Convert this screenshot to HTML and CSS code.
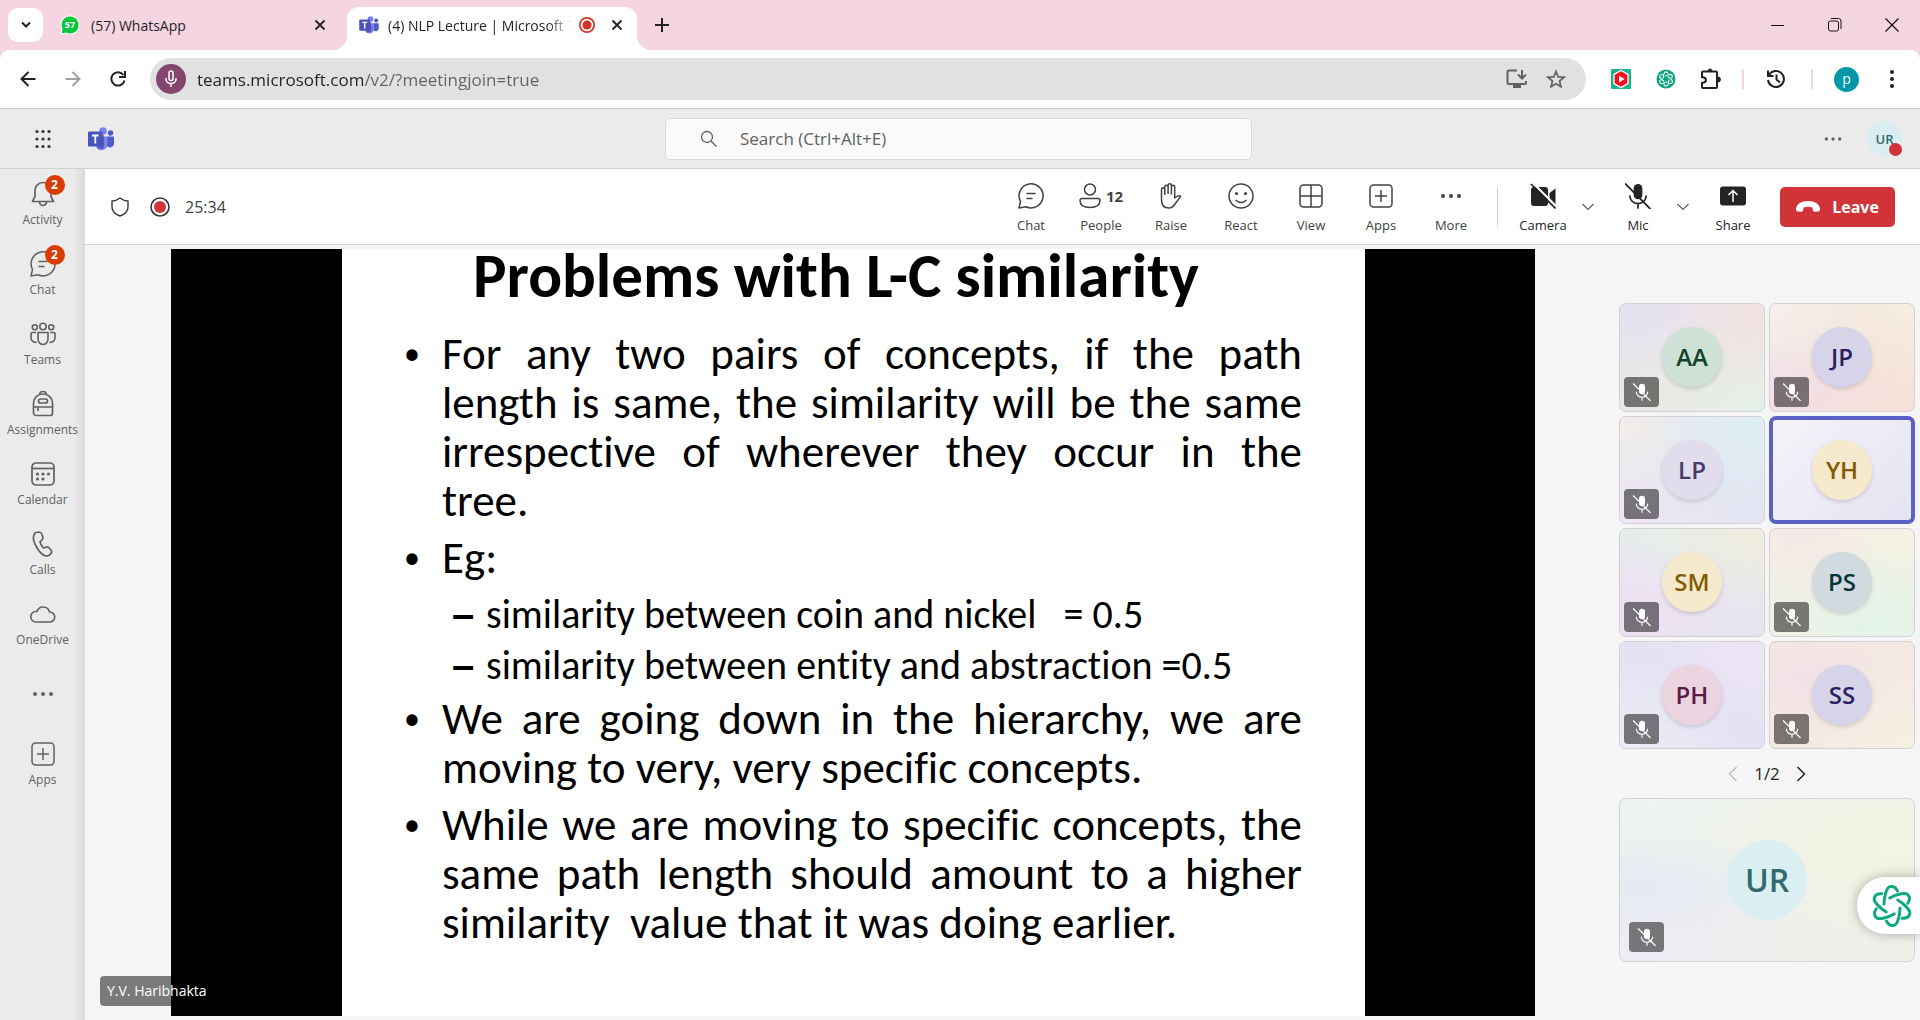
FILE: index.html
```html
<!DOCTYPE html>
<html lang="en">
<head>
<meta charset="utf-8">
<title>(4) NLP Lecture | Microsoft Teams</title>
<link rel="stylesheet" href="styles.css">
</head>
<body>
<svg class="defs" aria-hidden="true">
  <symbol id="mic-off" viewBox="0 0 24 24">
    <rect x="8" y="1" width="8" height="14" rx="4" fill="currentColor"/>
    <path d="M4.500 12a7.500 7 0 0 0 15 0M12 19v4" fill="none" stroke="currentColor" stroke-width="1.600" stroke-linecap="round"/>
    <path class="slash-gap" d="M2 -1L26 23" fill="none" stroke-width="2"/>
    <path d="M0 .5L23.500 24" fill="none" stroke="currentColor" stroke-width="1.700"/>
  </symbol>
  <symbol id="chevron" viewBox="0 0 12 8"><path d="M.5 1L6 6.500 11.500 1" fill="none" stroke="currentColor" stroke-width="1.200"/></symbol>
  <symbol id="close" viewBox="0 0 12 12"><path d="M1.500 1.500l9 9M10.500 1.500l-9 9" fill="none" stroke="currentColor" stroke-width="1.900"/></symbol>
  <symbol id="teams" viewBox="0 0 26 24">
    <circle cx="22.500" cy="6" r="2.700" fill="#5059c9"/><circle cx="15" cy="4" r="3.800" fill="#7b83eb"/>
    <path d="M19 9.500h6a1 1 0 0 1 1 1V17a4 4 0 0 1-7 2z" fill="#5059c9"/>
    <path d="M9 9.500h10.500v8a6 6 0 0 1-11 3z" fill="#7b83eb"/>
    <path d="M10 8h6v12q0 1.500-1.500 1.500H9z" fill="#3b4099" opacity=".6"/>
    <rect y="4.500" width="14.500" height="15" rx="1.300" fill="#4b53bc"/>
    <path d="M4 8.500h6.600M7.300 8.500v8" fill="none" stroke="#fff" stroke-width="1.800"/>
  </symbol>
  <symbol id="knot" viewBox="-22 -22 44 44">
    <g fill="none" stroke="currentColor" stroke-width="3" stroke-linecap="round">
      <path d="M-8-2C-8-7-6-20-1-19.500 2-20 4-18 5.500-15"/>
      <path transform="rotate(60)" d="M-8-2C-8-7-6-20-1-19.500 2-20 4-18 5.500-15"/>
      <path transform="rotate(120)" d="M-8-2C-8-7-6-20-1-19.500 2-20 4-18 5.500-15"/>
      <path transform="rotate(180)" d="M-8-2C-8-7-6-20-1-19.500 2-20 4-18 5.500-15"/>
      <path transform="rotate(240)" d="M-8-2C-8-7-6-20-1-19.500 2-20 4-18 5.500-15"/>
      <path transform="rotate(300)" d="M-8-2C-8-7-6-20-1-19.500 2-20 4-18 5.500-15"/>
    </g>
  </symbol>
  <symbol id="chat" viewBox="0 0 26 26"><path d="M1 25l1.500-6.500A12 12 0 1 1 8 23.700zM9 10.500h8M9 15.500h5" fill="none" stroke="currentColor" stroke-width="1.500" stroke-linecap="round" stroke-linejoin="round"/></symbol>
  <symbol id="apps" viewBox="0 0 24 24"><rect x="1" y="1" width="22" height="22" rx="3.500" fill="none" stroke="currentColor" stroke-width="1.500"/><path d="M12 6v12M6 12h12" stroke="currentColor" stroke-width="1.500"/></symbol>
  <symbol id="dots" viewBox="0 0 24 6"><circle cx="4" cy="3" r="2" fill="currentColor"/><circle cx="12" cy="3" r="2" fill="currentColor"/><circle cx="20" cy="3" r="2" fill="currentColor"/></symbol>
</svg>

<header class="tabs">
  <button class="tab-search" aria-label="Search tabs"><svg width="12" height="8"><path d="M2 1.500l4 4 4-4" fill="none" stroke="#222" stroke-width="2"/></svg></button>
  <div class="tab">
    <svg class="favicon" width="20" height="20" viewBox="0 0 20 20"><path d="M1 19l1-5a9 9 0 1 1 4 4z" fill="#06c63a" stroke="#fff" stroke-width="1"/><text x="10" y="13" text-anchor="middle" class="fav-count">57</text></svg>
    <span class="tab-title">(57) WhatsApp</span>
    <button class="icon-btn" aria-label="Close tab"><svg width="12" height="12"><use href="#close"/></svg></button>
  </div>
  <div class="tab active">
    <svg class="favicon" width="20" height="18"><use href="#teams"/></svg>
    <span class="tab-title">(4) NLP Lecture | Microsoft Teams</span>
    <svg class="rec" width="18" height="18"><circle cx="9" cy="9" r="7.200" fill="#fff" stroke="#d93025" stroke-width="1.700"/><circle cx="9" cy="9" r="4.500" fill="#d93025"/></svg>
    <button class="icon-btn" aria-label="Close tab"><svg width="12" height="12"><use href="#close"/></svg></button>
  </div>
  <button class="icon-btn new-tab" aria-label="New tab"><svg width="14" height="14"><path d="M7 0v14M0 7h14" stroke="#222" stroke-width="2"/></svg></button>
  <div class="window-controls">
    <button aria-label="Minimize"><svg width="14" height="14"><path d="M0 7.500h13" stroke="#111"/></svg></button>
    <button aria-label="Restore"><svg width="14" height="14" fill="none" stroke="#111"><rect x=".5" y="3" width="10" height="10" rx="2"/><path d="M3 .5h7.500a2.500 2.500 0 0 1 2.500 2.500V11"/></svg></button>
    <button aria-label="Close"><svg width="14" height="14"><path d="M.5.5l13 13M13.500.5l-13 13" stroke="#111" stroke-width="1.200"/></svg></button>
  </div>
</header>

<nav class="toolbar" aria-label="Browser">
  <button class="tool" aria-label="Back"><svg width="16" height="16" fill="none" stroke="#222" stroke-width="2"><path d="M15.500 8H2M8.500 1L1.500 8l7 7"/></svg></button>
  <button class="tool" aria-label="Forward"><svg width="16" height="16" fill="none" stroke="#a0a0a0" stroke-width="2"><path d="M.5 8H14M7.500 1l7 7-7 7"/></svg></button>
  <button class="tool" aria-label="Reload"><svg width="18" height="18" fill="none" stroke="#222" stroke-width="2"><path d="M15.500 10.500A6.700 6.700 0 1 1 14.500 5M16 1v6h-6"/></svg></button>
  <div class="omnibox">
    <button class="mic-chip" aria-label="Microphone in use"><svg width="12" height="18" fill="none" stroke="#fff" stroke-width="1.500"><rect x="4" y="1" width="4" height="9.500" rx="2"/><path d="M1 8v1a5 4.500 0 0 0 10 0V8M6 13.500V17"/></svg></button>
    <input class="url" aria-label="Address" value="teams.microsoft.com/v2/?meetingjoin=true">
    <button class="icon-btn" aria-label="Install"><svg width="22" height="20" fill="none" stroke="#5f6368" stroke-width="2"><path d="M11 1.500H3a1.500 1.500 0 0 0-1.500 1.500v10.500A1.500 1.500 0 0 0 3 15h15.500a1.500 1.500 0 0 0 1.500-1.500V12M16 1v8M12 5.500l4 4 4-4"/><path d="M7 17.500h8" stroke-width="3"/></svg></button>
    <button class="icon-btn" aria-label="Bookmark"><svg width="20" height="20" fill="none" stroke="#5f6368" stroke-width="1.800"><path d="M10 2.500l2.200 5.300 5.800.5-4.400 3.700 1.300 5.700-4.900-3-4.900 3 1.300-5.700L2 8.300l5.800-.5z"/></svg></button>
  </div>
  <div class="extensions">
    <button class="tool" aria-label="Video extension"><svg width="20" height="20"><rect width="20" height="20" rx="1" fill="#19b48c"/><path d="M10 1.500l7 4v9l-7 4-7-4v-9z" fill="#f50f1e" stroke="#fff" stroke-width="1.300"/><path d="M8 6.500v7l5.500-3.500z" fill="#fff"/></svg></button>
    <button class="tool" aria-label="Assistant extension"><svg width="20" height="20" viewBox="0 0 20 20"><circle cx="10" cy="10" r="9.500" fill="#10a37f"/><svg class="mini-knot" x="2" y="2" width="16" height="16"><use href="#knot"/></svg></svg></button>
    <button class="tool" aria-label="Extensions"><svg width="22" height="22" fill="none" stroke="#222" stroke-width="2"><path d="M2 4.500a1 1 0 0 1 1-1h13a1 1 0 0 1 1 1V19a1 1 0 0 1-1 1H3a1 1 0 0 1-1-1v-4q4-.5 4-3t-4-3z"/><path d="M8 3a2 2 0 0 1 4 0zM18 9a2 2 0 0 1 0 5z" fill="#222" stroke-width="1"/></svg></button>
    <span class="sep"></span>
    <button class="tool" aria-label="History"><svg width="20" height="20" fill="none" stroke="#222" stroke-width="2"><path d="M3 6a8 8 0 1 1-1 5M2 1.500V7h5.500M10.500 5.500V10.500l3.500 3"/></svg></button>
    <span class="sep second"></span>
    <button class="tool" aria-label="Profile"><span class="profile">p</span></button>
    <button class="tool" aria-label="Menu"><svg width="6" height="20" fill="#222"><circle cx="3" cy="3" r="2"/><circle cx="3" cy="10" r="2"/><circle cx="3" cy="17" r="2"/></svg></button>
  </div>
</nav>

<header class="teams-head">
  <div class="brand">
    <button class="tool waffle" aria-label="App launcher"><svg width="20" height="20" fill="#333"><circle cx="4" cy="2.500" r="1.600"/><circle cx="10" cy="2.500" r="1.600"/><circle cx="16" cy="2.500" r="1.600"/><circle cx="4" cy="10" r="1.600"/><circle cx="10" cy="10" r="1.600"/><circle cx="16" cy="10" r="1.600"/><circle cx="4" cy="17.500" r="1.600"/><circle cx="10" cy="17.500" r="1.600"/><circle cx="16" cy="17.500" r="1.600"/></svg></button>
    <svg width="26" height="24"><use href="#teams"/></svg>
  </div>
  <label class="search"><svg width="18" height="18" fill="none" stroke="#616161" stroke-width="1.300"><circle cx="7" cy="7" r="5.500"/><path d="M11 11l5.500 5.500"/></svg><input type="text" aria-label="Search" placeholder="Search (Ctrl+Alt+E)"></label>
  <div class="head-end">
    <button class="icon-btn" aria-label="Settings and more"><svg class="grey" width="20" height="6"><use href="#dots"/></svg></button>
    <button class="me" aria-label="Account">UR<span class="presence"></span></button>
  </div>
</header>

<div class="body">
  <nav class="rail" aria-label="Teams apps">
    <button><span class="glyph"><svg width="24" height="26" viewBox="0 0 24 26" fill="none" stroke="currentColor" stroke-width="1.700"><path d="M4 9.500a8 8 0 0 1 16 0v6l2.500 5h-21l2.500-5zM8.500 21a3.500 3.500 0 0 0 7 0" stroke-linejoin="round"/></svg><span class="badge">2</span></span>Activity</button>
    <button><span class="glyph"><svg width="26" height="26"><use href="#chat"/></svg><span class="badge">2</span></span>Chat</button>
    <button><span class="glyph"><svg width="26" height="24" viewBox="0 0 26 24" fill="none" stroke="currentColor" stroke-width="1.600"><circle cx="13" cy="4.500" r="3.200"/><circle cx="4.800" cy="5.300" r="2.500"/><circle cx="21.200" cy="5.300" r="2.500"/><path d="M8 10.500h10v6.500a5 5.500 0 0 1-10 0zM6 10.500H2.500a1.500 1.500 0 0 0-1.500 1.500v4a4.500 4.500 0 0 0 5.500 4.300M20 10.500h3.500a1.500 1.500 0 0 1 1.500 1.500v4a4.500 4.500 0 0 1-5.500 4.300"/></svg></span>Teams</button>
    <button><span class="glyph"><svg width="22" height="26" viewBox="0 0 22 26" fill="none" stroke="currentColor" stroke-width="1.700"><path d="M1.500 12a9.500 9 0 0 1 19 0v10a2.500 2.500 0 0 1-2.500 2.500H4A2.500 2.500 0 0 1 1.500 22zM1.500 16h19M6 16v4M7.500 4V3.500a3.500 3 0 0 1 7 0V4"/><rect x="6.500" y="8" width="9" height="4" rx="2"/></svg></span>Assignments</button>
    <button><span class="glyph"><svg width="24" height="24" viewBox="0 0 24 24" fill="none" stroke="currentColor" stroke-width="1.700"><rect x="1" y="1" width="22" height="22" rx="4"/><path d="M1 6.500h22"/><g fill="currentColor" stroke="none"><circle cx="6.500" cy="12" r="1.600"/><circle cx="12" cy="12" r="1.600"/><circle cx="17.500" cy="12" r="1.600"/><circle cx="6.500" cy="17" r="1.600"/><circle cx="12" cy="17" r="1.600"/></g></svg></span>Calendar</button>
    <button><span class="glyph"><svg width="22" height="26" viewBox="0 0 22 26" fill="none" stroke="currentColor" stroke-width="1.700"><path d="M4 1.500l3-.5q2 0 2.800 2l1 3q.3 1.500-.8 2.700L8 11q1 3.500 3.500 6l3-1q1.500-.4 2.500.7l2.200 2.500q1 1.500 0 3Q17 25.500 14 25 9 24 4.500 16T2 4q.5-2 2-2.500z"/></svg></span>Calls</button>
    <button><span class="glyph"><svg width="26" height="18" viewBox="0 0 26 18" fill="none" stroke="currentColor" stroke-width="1.600"><path d="M6 17a5 5 0 0 1 0-10.500h1A6.500 6.500 0 0 1 19.500 7a5 5 0 0 1 .5 10z"/></svg></span>OneDrive</button>
    <button class="only-icon" aria-label="More apps"><svg width="24" height="6"><use href="#dots"/></svg></button>
    <button><span class="glyph"><svg width="24" height="24"><use href="#apps"/></svg></span>Apps</button>
  </nav>

  <main class="meeting">
    <div class="controls">
      <svg width="18" height="20" fill="none" stroke="#333" stroke-width="1.400"><path d="M9 1q3.500 2.800 8 3v6q0 6-8 9-8-3-8-9V4q4.500-.2 8-3z" stroke-linejoin="round"/></svg>
      <svg width="20" height="20"><circle cx="10" cy="10" r="9" fill="#fff" stroke="#333" stroke-width="1.600"/><circle cx="10" cy="10" r="6" fill="#d13438"/></svg>
      <span class="timer">25:34</span>
      <div class="actions">
        <button><span class="glyph"><svg width="26" height="26"><use href="#chat"/></svg></span>Chat</button>
        <button><span class="glyph"><svg width="22" height="26" viewBox="0 0 22 26" fill="none" stroke="currentColor" stroke-width="1.500"><circle cx="11" cy="6.500" r="5.500"/><path d="M3 15.500h16a2 2 0 0 1 2 2q0 7-10 7t-10-7a2 2 0 0 1 2-2z"/></svg><b class="count">12</b></span>People</button>
        <button><span class="glyph"><svg width="22" height="26" viewBox="0 0 22 26" fill="none" stroke="currentColor" stroke-width="1.500" stroke-linejoin="round"><path d="M1.500 15V6.500a1.600 1.600 0 0 1 3.300 0V12M4.800 12V4a1.600 1.600 0 0 1 3.300 0v7M8.100 11V2.500a1.600 1.600 0 0 1 3.300 0V11M11.400 11.500V4a1.600 1.600 0 0 1 3.300 0v11l3-2q1.500-.8 3 .4L15 21q-2.500 4-6 4-7.500 0-7.500-8v-3"/></svg></span>Raise</button>
        <button><span class="glyph"><svg width="26" height="26" viewBox="0 0 26 26"><circle cx="13" cy="13" r="12" fill="none" stroke="currentColor" stroke-width="1.500"/><circle cx="8.500" cy="10.500" r="1.600" fill="currentColor"/><circle cx="17.500" cy="10.500" r="1.600" fill="currentColor"/><path d="M7.500 17q5.500 5 11 0" fill="none" stroke="currentColor" stroke-width="1.500"/></svg></span>React</button>
        <button><span class="glyph"><svg width="24" height="24" viewBox="0 0 24 24" fill="none" stroke="currentColor" stroke-width="1.500"><rect x="1" y="1" width="22" height="22" rx="3.500"/><path d="M12 1v22M1 12h22"/></svg></span>View</button>
        <button><span class="glyph"><svg width="24" height="24"><use href="#apps"/></svg></span>Apps</button>
        <button><span class="glyph"><svg width="24" height="6"><use href="#dots"/></svg></span>More</button>
      </div>
      <span class="divider"></span>
      <div class="devices">
        <button class="dark"><span class="glyph"><svg width="26" height="26" viewBox="0 0 26 26"><rect x="1" y="4" width="17" height="19" rx="3" fill="currentColor"/><path d="M19.500 10l6-4.500v16l-6-4.500z" fill="currentColor"/><path d="M3 0l25 25" stroke="#fff" stroke-width="2"/><path d="M1 1l24.500 24.500" stroke="currentColor" stroke-width="1.700"/></svg></span>Camera</button>
        <button class="caret" aria-label="Camera options"><svg width="12" height="8"><use href="#chevron"/></svg></button>
        <button class="dark"><span class="glyph"><svg class="mic" width="26" height="26"><use href="#mic-off"/></svg></span>Mic</button>
        <button class="caret" aria-label="Mic options"><svg width="12" height="8"><use href="#chevron"/></svg></button>
        <button class="dark"><span class="glyph"><svg width="26" height="20" viewBox="0 0 26 20"><rect width="26" height="19" y=".5" rx="3" fill="currentColor"/><path d="M13 16V4.500M8.500 9L13 4.500 17.500 9" fill="none" stroke="#fff" stroke-width="1.500"/></svg></span>Share</button>
      </div>
      <button class="leave"><svg width="24" height="12" viewBox="0 0 24 12"><path d="M12 0Q22 0 24 7q.3 3-1.500 3.500l-4 .2Q17 10.500 16.800 9L16.500 6.500Q12 5 7.500 6.500L7.200 9Q7 10.500 5.500 10.700l-4-.2Q-.3 10 0 7 2 0 12 0z" fill="#fff"/></svg>Leave</button>
    </div>

    <div class="stage">
      <div class="share">
        <div class="video">
          <article class="slide">
            <h1>Problems with L-C similarity</h1>
            <ul class="points">
              <li><span class="full">For any two pairs of concepts, if the path</span><span class="full">length is same, the similarity will be the same</span><span class="full">irrespective of wherever they occur in the</span>tree.</li>
              <li>Eg:
                <ul class="sub">
                  <li>similarity between coin and nickel &nbsp; = 0.5</li>
                  <li>similarity between entity and abstraction =0.5</li>
                </ul>
              </li>
              <li><span class="full">We are going down in the hierarchy, we are</span>moving to very, very specific concepts.</li>
              <li><span class="full">While we are moving to specific concepts, the</span><span class="full">same path length should amount to a higher</span>similarity &nbsp;value that it was doing earlier.</li>
            </ul>
          </article>
        </div>
        <span class="speaker">Y.V. Haribhakta</span>
      </div>

      <aside class="people">
        <div class="tiles">
          <div class="tile t-aa"><span class="avatar">AA</span><span class="mute"><svg width="18" height="18"><use href="#mic-off"/></svg></span></div>
          <div class="tile t-jp"><span class="avatar">JP</span><span class="mute"><svg width="18" height="18"><use href="#mic-off"/></svg></span></div>
          <div class="tile t-lp"><span class="avatar">LP</span><span class="mute"><svg width="18" height="18"><use href="#mic-off"/></svg></span></div>
          <div class="tile t-yh speaking"><span class="avatar">YH</span></div>
          <div class="tile t-sm"><span class="avatar">SM</span><span class="mute"><svg width="18" height="18"><use href="#mic-off"/></svg></span></div>
          <div class="tile t-ps"><span class="avatar">PS</span><span class="mute"><svg width="18" height="18"><use href="#mic-off"/></svg></span></div>
          <div class="tile t-ph"><span class="avatar">PH</span><span class="mute"><svg width="18" height="18"><use href="#mic-off"/></svg></span></div>
          <div class="tile t-ss"><span class="avatar">SS</span><span class="mute"><svg width="18" height="18"><use href="#mic-off"/></svg></span></div>
        </div>
        <div class="pager">
          <button aria-label="Previous page" disabled><svg width="10" height="16" fill="none" stroke="#bdbdbd" stroke-width="1.400"><path d="M8.500 1L1.500 8l7 7"/></svg></button>
          <span>1/2</span>
          <button aria-label="Next page"><svg width="10" height="16" fill="none" stroke="#242424" stroke-width="1.500"><path d="M1.500 1l7 7-7 7"/></svg></button>
        </div>
        <div class="tile self"><span class="avatar">UR</span><span class="mute"><svg width="18" height="18"><use href="#mic-off"/></svg></span></div>
      </aside>
    </div>
  </main>
</div>
<button class="assistant" aria-label="Assistant"><svg width="44" height="44"><use href="#knot"/></svg></button>
</body>
</html>
```
FILE: styles.css
```css
* { box-sizing: border-box; }
body {
  margin: 0;
  min-height: 100vh;
  display: flex;
  flex-direction: column;
  overflow-x: hidden;
  font-family: "Open Sans", "Noto Sans", sans-serif;
  font-size: 12px;
  color: #242424;
  background: #ebebeb;
}
button, input { font: inherit; color: inherit; border: 0; background: none; padding: 0; outline: 0; }
button { display: flex; align-items: center; justify-content: center; }
svg { display: block; flex: none; }
.defs { position: absolute; width: 0; height: 0; }
.icon-btn { width: 28px; height: 28px; }

/* browser tab strip */
.tabs { display: flex; align-items: center; height: 50px; padding-left: 8px; background: #f6d5e3; }
.tab-search { width: 35px; height: 34px; border-radius: 10px; background: #fff; }
.tab { display: flex; align-items: center; width: 304px; height: 43px; padding: 0 13px 0 17px; font-size: 14px; }
.tab-title { flex: 1; margin-left: 11px; overflow: hidden; white-space: nowrap; }
.tab.active {
  position: relative;
  align-self: flex-end;
  width: 290px;
  padding: 0 6px 7px 12px;
  border-radius: 12px 12px 0 0;
  background: #fff;
}
.tab.active::before, .tab.active::after {
  content: "";
  position: absolute;
  bottom: 0;
  width: 14px;
  height: 14px;
}
.tab.active::before { left: -14px; background: radial-gradient(circle at 0 0, transparent 14px, #fff 14px); }
.tab.active::after { right: -14px; background: radial-gradient(circle at 100% 0, transparent 14px, #fff 14px); }
.tab.active .tab-title { margin: 0 6px 0 9px; -webkit-mask: linear-gradient(to right, #000 160px, transparent 184px); }
.tab.active .icon-btn { margin-left: 7px; }
.fav-count { font: bold 9px "Open Sans", sans-serif; fill: #fff; }
.new-tab { margin-left: 11px; }
.window-controls { display: flex; margin-left: auto; }
.window-controls button { width: 57px; height: 50px; }

/* browser toolbar */
.toolbar {
  display: flex;
  align-items: center;
  height: 59px;
  padding: 0 6px 0 5px;
  border-bottom: 1px solid #c9c9c9;
  background:
    radial-gradient(circle at 10px 10px, #fff 10px, #f6d5e3 10px) 0 0 / 10px 10px no-repeat,
    radial-gradient(circle at 0 10px, #fff 10px, #f6d5e3 10px) 100% 0 / 10px 10px no-repeat,
    #fff;
}
.tool { width: 45px; height: 40px; }
.omnibox {
  flex: 1;
  display: flex;
  align-items: center;
  gap: 11px;
  height: 42px;
  margin-left: 10px;
  padding: 0 16px 0 6px;
  border-radius: 21px;
  background: #e1e1e1;
}
.mic-chip { width: 30px; height: 30px; border-radius: 50%; background: #84456f; }
.url {
  flex: 1;
  height: 30px;
  font-size: 17px;
  color: transparent;
  background: linear-gradient(to right, #202124 166px, #5f6368 166px);
  -webkit-background-clip: text;
  background-clip: text;
}
.extensions { display: flex; align-items: center; margin-left: 12px; }
.sep { width: 2px; height: 20px; margin: 0 9px; background: #f6d5e3; }
.sep.second { margin: 0 11px 0 13px; }
.profile { width: 25px; height: 25px; border-radius: 50%; background: #0097a7; color: #fff; font-size: 14px; line-height: 23px; }
.mini-knot { color: #fff; }

/* Teams header */
.teams-head {
  display: grid;
  grid-template-columns: 1fr minmax(200px, 587px) 1fr;
  align-items: center;
  height: 60px;
  padding: 0 18px 0 15px;
  border-bottom: 1px solid #d1d1d1;
}
.brand { display: flex; align-items: center; gap: 23px; }
.waffle { margin-left: 5px; }
.search {
  display: flex;
  align-items: center;
  gap: 22px;
  height: 42px;
  padding-left: 34px;
  border: 1px solid #d8d8d8;
  border-radius: 5px;
  background: #fafafa;
}
.search input { flex: 1; font-size: 17px; }
.search input::placeholder { color: #616161; opacity: 1; }
.head-end { display: flex; align-items: center; justify-content: flex-end; gap: 20px; }
.grey { color: #616161; }
.me { position: relative; width: 35px; height: 35px; border-radius: 50%; background: #daeef1; color: #33666b; font-weight: 600; font-size: 13px; }
.presence { position: absolute; right: 0; bottom: 0; width: 13px; height: 13px; border-radius: 50%; background: #d13438; }

/* app rail */
.body { flex: 1; display: flex; }
.rail { display: flex; flex-direction: column; width: 85px; flex: none; color: #616161; background: linear-gradient(to right, #ebebeb 74px, #d9d9d9); }
.rail button { height: 70px; padding-top: 12px; flex-direction: column; justify-content: flex-start; gap: 5px; line-height: 16px; }
.rail .only-icon { padding: 0; justify-content: center; }
.glyph { position: relative; display: flex; align-items: center; justify-content: center; height: 26px; }
.badge {
  position: absolute;
  left: 50%;
  top: -6px;
  margin-left: 2px;
  width: 20px;
  height: 20px;
  border-radius: 50%;
  background: #da3b01;
  color: #fff;
  font-weight: 700;
  line-height: 20px;
  text-align: center;
}

/* meeting bar */
.meeting { flex: 1; display: flex; flex-direction: column; min-width: 0; background: #f5f5f5; }
.controls { display: flex; align-items: center; height: 76px; padding: 0 25px 0 26px; border-bottom: 1px solid #d6d6d6; background: #fff; }
.controls > svg + svg { margin-left: 21px; }
.timer { margin-left: 15px; font-size: 16px; color: #424242; }
.actions { display: flex; margin-left: auto; color: #424242; }
.actions button, .devices .dark { width: 70px; padding-top: 4px; flex-direction: column; gap: 8px; line-height: 17px; font-size: 13px; }
.count { margin-left: 5px; font-size: 15px; font-weight: 700; }
.divider { width: 1px; height: 40px; margin: 0 11px; background: #d1d1d1; }
.devices { display: flex; }
.devices .dark { width: 68px; color: #242424; }
.caret { width: 27px; height: 60px; padding-right: 5px; color: #616161; }
.slash-gap { stroke: transparent; }
.mic .slash-gap { stroke: #fff; }
.leave { gap: 12px; width: 115px; height: 40px; margin-left: 13px; border-radius: 5px; background: #d13438; color: #fff; font-size: 16px; font-weight: 700; }

/* shared content */
.stage { flex: 1; display: flex; padding: 4px 5px 4px 0; }
.share { position: relative; flex: 1; display: flex; padding: 0 84px 0 86px; }
.video { flex: 1; display: flex; padding: 0 170px 0 171px; background: #000; }
.slide {
  flex: 1;
  padding: 0 63px 0 100px;
  background: #fff;
  color: #000;
  font-family: Calibri, Carlito, Lato, sans-serif;
  font-size: 45px;
  line-height: 49px;
  font-variant-ligatures: none;
}
.slide h1 { margin: 0 0 26px; padding-right: 72px; font-size: 63px; line-height: 54px; text-align: center; white-space: nowrap; }
.slide ul { margin: 0; padding: 0; list-style: none; }
.slide li { position: relative; margin-bottom: 8px; white-space: nowrap; }
.points > li::before { content: "•"; position: absolute; left: -38px; font-size: 32px; }
.full { display: block; text-align-last: justify; }
.slide .sub { margin-bottom: -5px; padding-top: 7px; font-size: 40px; line-height: 51px; }
.slide .sub li { margin: 0 0 0 44px; }
.sub li::before { content: "–"; position: absolute; left: -34px; font-family: "Liberation Sans", sans-serif; font-weight: 700; }
.speaker { position: absolute; left: 15px; bottom: 10px; padding: 0 7px; border-radius: 4px; background: rgba(0, 0, 0, .5); color: #fff; font-size: 14px; line-height: 30px; }

/* participants */
.people { width: 296px; flex: none; padding-top: 54px; }
.tiles { display: grid; grid-template: repeat(4, 1fr) / 1fr 1fr; gap: 4px; height: 446px; }
.tile { position: relative; display: flex; align-items: center; justify-content: center; border: 1px solid #d3d0d6; border-radius: 7px; }
.avatar { width: 60px; height: 60px; border-radius: 50%; text-align: center; font-size: 24px; line-height: 60px; font-weight: 600; box-shadow: 0 2px 4px rgba(0, 0, 0, .14); }
.mute { position: absolute; left: 4px; bottom: 4px; display: flex; align-items: center; justify-content: center; width: 35px; height: 30px; border-radius: 4px; background: rgba(0, 0, 0, .5); color: #fff; }
.t-aa { background: radial-gradient(at 0 0, #e5e1f2, transparent 60%), radial-gradient(at 100% 0, #f2e1e1, transparent 60%), radial-gradient(at 100% 100%, #e5f0e5, transparent 60%), #e9e8e4; }
.t-aa .avatar { background: #cfe0d6; color: #0e4429; }
.t-jp { background: radial-gradient(at 0 0, #f4f1ed, transparent 55%), radial-gradient(at 100% 0, #f5ede0, transparent 60%), radial-gradient(at 0 75%, #f1deea, transparent 60%), #f5e1d9; }
.t-jp .avatar { background: #d6d4e9; color: #292060; }
.t-lp { background: radial-gradient(at 100% 0, #deeef5, transparent 60%), radial-gradient(at 0 0, #f2ede8, transparent 60%), radial-gradient(at 0 100%, #f0e5f4, transparent 60%), #e3e6f2; }
.t-lp .avatar { background: #e2ddec; color: #463b66; }
.t-yh { background: linear-gradient(135deg, #f4f4f8, #e6e2f2); }
.tile.speaking { border: 4px solid #5b5fc7; }
.t-yh .avatar { background: #f7e9cd; color: #835b00; }
.t-sm { background: radial-gradient(at 0 80%, #eedff4, transparent 65%), radial-gradient(at 90% 0, #efeddd, transparent 55%), radial-gradient(at 30% 0, #e6efe9, transparent 60%), #e6e6ee; }
.t-sm .avatar { background: #f7e9cd; color: #835b00; }
.t-ps { background: radial-gradient(at 20% 0, #f5e7e5, transparent 50%), radial-gradient(at 75% 100%, #e1f3e8, transparent 60%), radial-gradient(at 100% 10%, #f4f1e2, transparent 60%), #eff1e7; }
.t-ps .avatar { background: #d0dadf; color: #07333b; }
.t-ph { background: radial-gradient(at 100% 0, #ede5f5, transparent 60%), radial-gradient(at 0 100%, #ebedf6, transparent 60%), #e5e2f3; }
.t-ph .avatar { background: #ebd3e0; color: #591b44; }
.t-ss { background: radial-gradient(at 25% 35%, #f2e0e7, transparent 55%), radial-gradient(at 100% 100%, #f4f1e3, transparent 60%), #f4e8e2; }
.t-ss .avatar { background: #d6d4e9; color: #292060; }
.pager { display: flex; align-items: center; justify-content: center; gap: 16px; height: 49px; font-size: 17px; }
.self { height: 164px; background: radial-gradient(at 0 55%, #e4eaf2, transparent 50%), radial-gradient(at 0 100%, #eeeaf5, transparent 50%), radial-gradient(at 95% 30%, #f3f4e1, transparent 55%), radial-gradient(at 10% 0, #edf4f1, transparent 50%), #f0f0ea; }
.self .avatar { width: 80px; height: 80px; font-size: 32px; line-height: 80px; background: #daeff2; color: #33696d; box-shadow: none; }
.self .mute { left: 9px; bottom: 9px; }

.assistant { position: fixed; right: 0; bottom: 86px; width: 63px; height: 57px; padding-left: 6px; border-radius: 28px 0 0 28px; background: #fff; color: #0fa981; box-shadow: 0 0 12px rgba(0, 0, 0, .3); }
```
